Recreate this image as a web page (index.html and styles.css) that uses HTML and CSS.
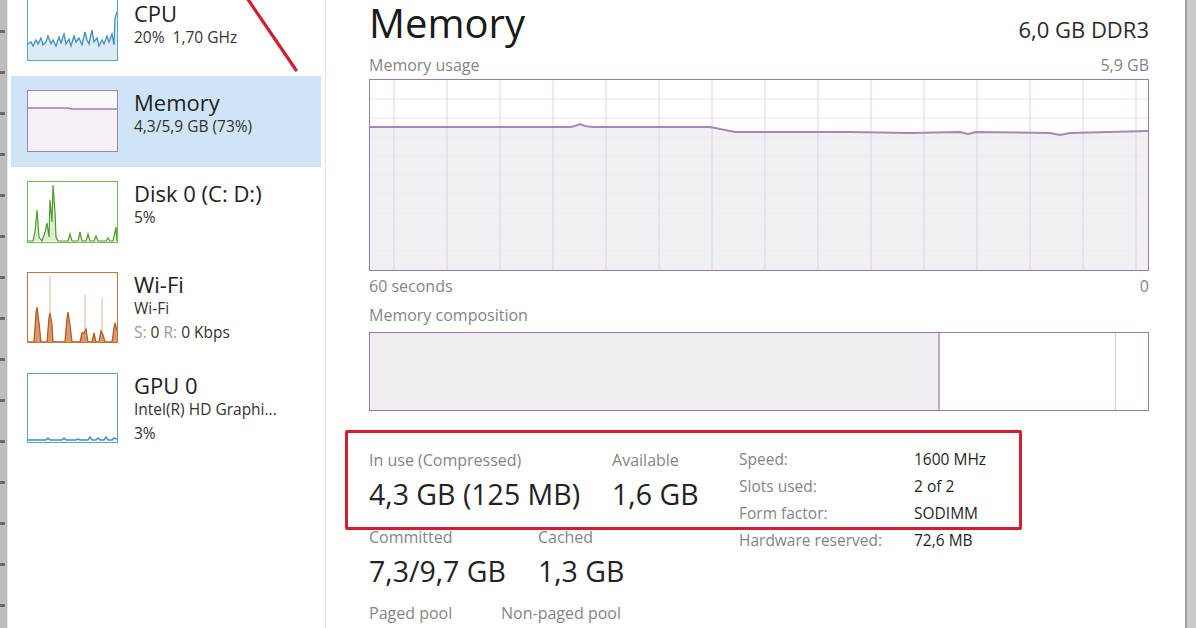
FILE: index.html
```html
<!DOCTYPE html>
<html lang="en">
<head>
<meta charset="utf-8">
<title>Task Manager - Memory</title>
<link rel="stylesheet" href="styles.css">
</head>
<body>
<div class="edge-left"></div>

<aside class="sidebar">
  <ul class="perf-list">
    <li class="perf-item">
      <div class="thumb thumb-cpu">
        <svg viewBox="0 0 89 60" preserveAspectRatio="none">
          <polygon fill="#dcebf6" points="0,44 3,42 5,46 8,40 10,44 13,38 15,45 18,42 20,36 23,44 25,40 28,46 31,37 33,43 36,34 38,44 41,39 43,46 46,36 48,42 51,38 54,45 57,32 59,40 61,44 64,30 66,42 69,38 71,46 74,40 76,44 79,36 81,42 84,34 86,45 87,18 89,12 89,60 0,60"/>
          <polyline fill="none" stroke="#3f8fc2" stroke-width="1.3" points="0,44 3,42 5,46 8,40 10,44 13,38 15,45 18,42 20,36 23,44 25,40 28,46 31,37 33,43 36,34 38,44 41,39 43,46 46,36 48,42 51,38 54,45 57,32 59,40 61,44 64,30 66,42 69,38 71,46 74,40 76,44 79,36 81,42 84,34 86,45 87,18 89,12"/>
        </svg>
      </div>
      <div class="perf-text perf-text-cpu">
        <div class="perf-title">CPU</div>
        <div class="perf-sub">20%&nbsp; 1,70 GHz</div>
      </div>
    </li>
    <li class="perf-item is-selected">
      <div class="thumb thumb-mem">
        <svg viewBox="0 0 89 60" preserveAspectRatio="none">
          <polygon fill="#f5f0f6" points="0,17 40,17 44,18 89,18 89,60 0,60"/>
          <polyline fill="none" stroke="#a07cb4" stroke-width="1.3" points="0,17 40,17 44,18 89,18"/>
        </svg>
      </div>
      <div class="perf-text">
        <div class="perf-title">Memory</div>
        <div class="perf-sub">4,3/5,9 GB (73%)</div>
      </div>
    </li>
    <li class="perf-item">
      <div class="thumb thumb-disk">
        <svg viewBox="0 0 89 60" preserveAspectRatio="none">
          <polygon fill="#dcefd0" points="0,59 5,59 7,50 9,28 11,55 14,59 17,50 19,41 21,55 22,18 24,40 25,3 27,30 28,55 30,59 40,59 42,52 44,59 50,59 52,50 54,59 58,59 60,52 62,59 66,59 68,54 70,59 78,59 80,56 82,59 85,59 87,50 88,45 89,59"/>
          <polyline fill="none" stroke="#4e9a2a" stroke-width="1.2" points="0,59 5,59 7,50 9,28 11,55 14,59 17,50 19,41 21,55 22,18 24,40 25,3 27,30 28,55 30,59 40,59 42,52 44,59 50,59 52,50 54,59 58,59 60,52 62,59 66,59 68,54 70,59 78,59 80,56 82,59 85,59 87,50 88,45 89,59"/>
        </svg>
      </div>
      <div class="perf-text">
        <div class="perf-title">Disk 0 (C: D:)</div>
        <div class="perf-sub">5%</div>
      </div>
    </li>
    <li class="perf-item">
      <div class="thumb thumb-wifi">
        <svg viewBox="0 0 89 69" preserveAspectRatio="none">
          <line x1="22" y1="69" x2="22" y2="3" stroke="#e3b597" stroke-width="1"/>
          <line x1="57" y1="69" x2="57" y2="22" stroke="#e3b597" stroke-width="1"/>
          <line x1="74" y1="69" x2="74" y2="24" stroke="#e3b597" stroke-width="1"/>
          <polygon fill="#d99a6e" points="0,69 6,69 8,40 9,34 11,50 13,69 19,69 21,45 22,40 24,52 25,69 37,69 39,45 40,39 42,52 44,69 52,69 54,60 56,60 58,56 60,69 64,69 66,60 68,69 71,69 73,58 75,62 77,69 84,69 86,55 87,50 89,58 89,69"/>
          <polyline fill="none" stroke="#b35c22" stroke-width="1.3" points="0,69 6,69 8,40 9,34 11,50 13,69 19,69 21,45 22,40 24,52 25,69 37,69 39,45 40,39 42,52 44,69 52,69 54,60 56,60 58,56 60,69 64,69 66,60 68,69 71,69 73,58 75,62 77,69 84,69 86,55 87,50 89,58"/>
        </svg>
      </div>
      <div class="perf-text">
        <div class="perf-title">Wi-Fi</div>
        <div class="perf-sub">Wi-Fi</div>
        <div class="perf-sub"><span class="dim">S:</span> 0 <span class="dim">R:</span> 0 Kbps</div>
      </div>
    </li>
    <li class="perf-item">
      <div class="thumb thumb-gpu">
        <svg viewBox="0 0 89 68" preserveAspectRatio="none">
          <polyline fill="none" stroke="#3e8dc4" stroke-width="1.5" points="0,66 18,66 20,64 22,66 34,66 36,64 38,66 48,66 50,65 52,66 60,66 62,63 64,66 68,66 70,64 72,66 76,66 78,63 80,66 84,66 86,64 89,65"/>
        </svg>
      </div>
      <div class="perf-text">
        <div class="perf-title">GPU 0</div>
        <div class="perf-sub">Intel(R) HD Graphi...</div>
        <div class="perf-sub">3%</div>
      </div>
    </li>
  </ul>
</aside>

<main class="main">
  <div class="head-row">
    <h1 class="head-title">Memory</h1>
    <div class="head-spec">6,0 GB DDR3</div>
  </div>

  <div class="label-row label-row-usage">
    <span>Memory usage</span>
    <span>5,9 GB</span>
  </div>

  <div class="usage-graph">
    <svg viewBox="0 0 778 190" preserveAspectRatio="none">
      <g stroke="#ecdcf0" stroke-width="1">
        <line x1="0" y1="19" x2="778" y2="19"/>
        <line x1="0" y1="38" x2="778" y2="38"/>
        <line x1="0" y1="57" x2="778" y2="57"/>
        <line x1="0" y1="76" x2="778" y2="76"/>
        <line x1="0" y1="95" x2="778" y2="95"/>
        <line x1="0" y1="114" x2="778" y2="114"/>
        <line x1="0" y1="133" x2="778" y2="133"/>
        <line x1="0" y1="152" x2="778" y2="152"/>
        <line x1="0" y1="171" x2="778" y2="171"/>
      </g>
      <polygon fill="#efedf0" fill-opacity="0.85" points="0,47 200,47 205,46 210,44 215,46 222,47 340,47 355,50 365,52 480,52 540,53 590,52 598,54 606,52 680,53 690,55 700,53 778,51 778,190 0,190"/>
      <g stroke="#e2d0e8" stroke-width="1">
        <line x1="24" y1="0" x2="24" y2="190"/>
        <line x1="77" y1="0" x2="77" y2="190"/>
        <line x1="130" y1="0" x2="130" y2="190"/>
        <line x1="183" y1="0" x2="183" y2="190"/>
        <line x1="236" y1="0" x2="236" y2="190"/>
        <line x1="289" y1="0" x2="289" y2="190"/>
        <line x1="342" y1="0" x2="342" y2="190"/>
        <line x1="395" y1="0" x2="395" y2="190"/>
        <line x1="448" y1="0" x2="448" y2="190"/>
        <line x1="501" y1="0" x2="501" y2="190"/>
        <line x1="554" y1="0" x2="554" y2="190"/>
        <line x1="607" y1="0" x2="607" y2="190"/>
        <line x1="660" y1="0" x2="660" y2="190"/>
        <line x1="713" y1="0" x2="713" y2="190"/>
        <line x1="766" y1="0" x2="766" y2="190"/>
      </g>
      <polyline fill="none" stroke="#a985b9" stroke-width="2" points="0,47 200,47 205,46 210,44 215,46 222,47 340,47 355,50 365,52 480,52 540,53 590,52 598,54 606,52 680,53 690,55 700,53 778,51"/>
    </svg>
  </div>

  <div class="label-row label-row-axis">
    <span>60 seconds</span>
    <span>0</span>
  </div>

  <div class="label-row label-row-comp">
    <span>Memory composition</span>
  </div>

  <div class="comp-bar">
    <div class="comp-inuse"></div>
    <div class="comp-standby"></div>
    <div class="comp-free"></div>
  </div>

  <section class="stats">
    <div class="stats-left">
      <div class="stat-row">
        <div class="stat">
          <div class="stat-label">In use (Compressed)</div>
          <div class="stat-value">4,3 GB (125 MB)</div>
        </div>
        <div class="stat">
          <div class="stat-label">Available</div>
          <div class="stat-value">1,6 GB</div>
        </div>
      </div>
      <div class="stat-row stat-row-2">
        <div class="stat">
          <div class="stat-label">Committed</div>
          <div class="stat-value">7,3/9,7 GB</div>
        </div>
        <div class="stat">
          <div class="stat-label">Cached</div>
          <div class="stat-value">1,3 GB</div>
        </div>
      </div>
      <div class="stat-row stat-row-3">
        <div class="stat stat-paged">
          <div class="stat-label">Paged pool</div>
        </div>
        <div class="stat">
          <div class="stat-label">Non-paged pool</div>
        </div>
      </div>
    </div>
    <dl class="spec-table">
      <dt>Speed:</dt><dd>1600 MHz</dd>
      <dt>Slots used:</dt><dd>2 of 2</dd>
      <dt>Form factor:</dt><dd>SODIMM</dd>
      <dt>Hardware reserved:</dt><dd>72,6 MB</dd>
    </dl>
  </section>

  <div class="highlight-box"></div>
</main>

<div class="edge-right"></div>

<svg class="annot-line" viewBox="0 0 80 80" width="80" height="80">
  <line x1="3" y1="-2" x2="52" y2="70" stroke="#d11f2f" stroke-width="3.2" stroke-linecap="round"/>
</svg>
</body>
</html>
```

FILE: styles.css
```css
* { box-sizing: border-box; }

html, body {
  margin: 0;
  padding: 0;
}

body {
  width: 1196px;
  height: 628px;
  overflow: hidden;
  display: flex;
  background: #ffffff;
  font-family: "Open Sans", "Noto Sans", "Liberation Sans", sans-serif;
  color: #1e1e1e;
  position: relative;
}

/* window edges behind */
.edge-left {
  flex: 0 0 8px;
  background:
    repeating-linear-gradient(to bottom, transparent 0 30px, #6a6a6a 30px 33px, transparent 33px 41px),
    #bdbdbd;
  background-size: 5px 100%, 100% 100%;
  background-repeat: no-repeat;
  border-right: 1px solid #e4e4e4;
}

.edge-right {
  flex: 0 0 11px;
  background: #cbcbcb;
  border-left: 2px solid #9c9c9c;
}

/* sidebar */
.sidebar {
  flex: 0 0 318px;
  border-right: 1px solid #e6e6e6;
  padding: 0 4px 0 3px;
}

.perf-list {
  list-style: none;
  margin: -15px 0 0 0;
  padding: 0;
}

.perf-item {
  display: flex;
  align-items: flex-start;
  gap: 16px;
  padding: 14px 0 15px 16px;
}

.perf-item.is-selected {
  background: #cfe4f6;
}

.thumb {
  flex: 0 0 91px;
  width: 91px;
  height: 62px;
  border: 1.5px solid #5b9fcc;
  background: #ffffff;
}

.thumb svg {
  display: block;
  width: 100%;
  height: 100%;
}

.thumb-cpu { border-color: #62a2cc; }
.thumb-mem { border-color: #a57fbd; background: #fbf8fc; }
.thumb-disk { border-color: #76b84a; }
.thumb-wifi { border-color: #c7773e; height: 71px; }
.thumb-gpu { border-color: #5ea3cf; height: 70px; }

.perf-text {
  display: flex;
  flex-direction: column;
}

.perf-text-cpu {
  margin-top: 2px;
}

.perf-title {
  font-size: 22px;
  line-height: 24px;
  color: #222222;
  white-space: nowrap;
}

.perf-sub {
  font-size: 15.5px;
  line-height: 24px;
  color: #333333;
  white-space: nowrap;
}

.perf-sub .dim {
  color: #9a9a9a;
}

/* main */
.main {
  flex: 0 0 859px;
  position: relative;
  padding: 0 36px 0 43px;
}

.head-row {
  display: flex;
  justify-content: space-between;
  align-items: baseline;
  height: 46px;
}

.head-title {
  margin: 0;
  font-size: 40px;
  line-height: 46px;
  font-weight: 400;
  color: #1a1a1a;
}

.head-spec {
  font-size: 22px;
  color: #2a2a2a;
}

.label-row {
  display: flex;
  justify-content: space-between;
  font-size: 16px;
  line-height: 20px;
  color: #858585;
}

.label-row-usage { margin-top: 9px; }
.label-row-axis { margin-top: 5px; }
.label-row-comp { margin-top: 9px; }

.usage-graph {
  margin-top: 4px;
  height: 192px;
  border: 1.5px solid #9d78af;
  background: #ffffff;
}

.usage-graph svg {
  display: block;
  width: 100%;
  height: 100%;
}

.comp-bar {
  margin-top: 7px;
  height: 79px;
  display: flex;
  border: 1.5px solid #9d78af;
}

.comp-inuse {
  flex: 0 0 570px;
  background: #f0eef1;
  border-right: 2px solid #c4a6d3;
}

.comp-standby {
  flex: 0 0 176px;
  background: #ffffff;
  border-right: 1.5px solid #d2ccd6;
}

.comp-free {
  flex: 1;
  background: #ffffff;
}

/* stats */
.stats {
  display: flex;
  align-items: flex-start;
  margin-top: 39px;
}

.stats-left {
  flex: 0 0 370px;
}

.stat-row {
  display: flex;
  gap: 32px;
}

.stat-row-2 {
  gap: 32px;
  margin-top: 15px;
}

.stat-row-3 {
  margin-top: 14px;
  gap: 0;
}

.stat-paged {
  width: 132px;
}

.stat-label {
  font-size: 16px;
  line-height: 20px;
  color: #858585;
  white-space: nowrap;
}

.stat-value {
  margin-top: 6px;
  font-size: 28.5px;
  line-height: 36px;
  color: #232323;
  white-space: nowrap;
}

.spec-table {
  margin: -4px 0 0 0;
  display: grid;
  grid-template-columns: 175px auto;
  grid-auto-rows: 27px;
  align-content: start;
  font-size: 15.5px;
  line-height: 27px;
}

.spec-table dt {
  color: #858585;
  white-space: nowrap;
}

.spec-table dd {
  margin: 0;
  color: #1f1f1f;
  white-space: nowrap;
}

/* annotations */
.highlight-box {
  position: absolute;
  left: 19px;
  top: 430px;
  width: 677px;
  height: 100px;
  border: 3.5px solid #d11f2f;
  border-radius: 2px;
}

.annot-line {
  position: absolute;
  left: 244px;
  top: 0;
}
```
